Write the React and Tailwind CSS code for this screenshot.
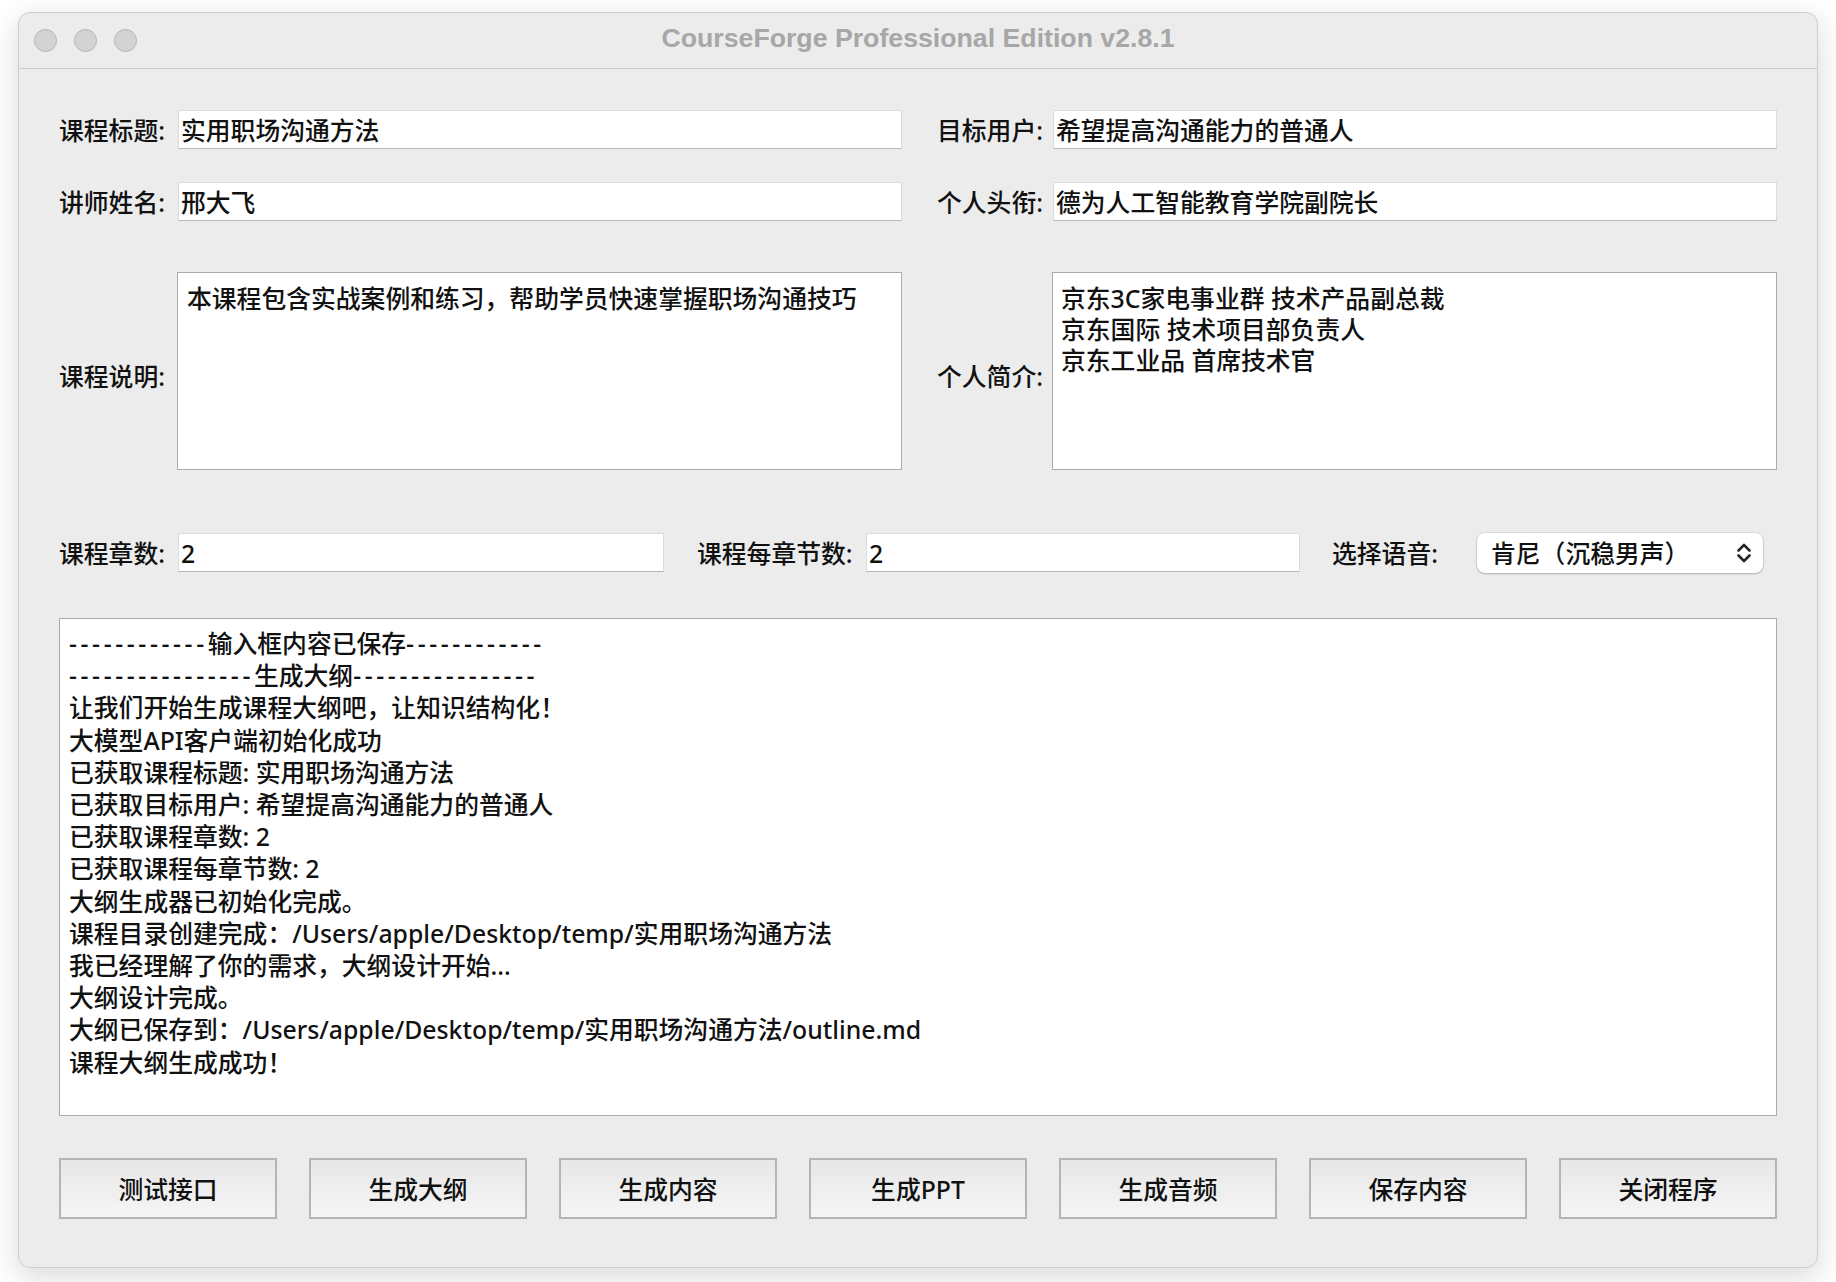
import React from "react";

const logLines = [
  <><span className="tracking-[3.6px]">------------</span>输入框内容已保存<span className="tracking-[3.6px]">------------</span></>,
  <><span className="tracking-[3.6px]">----------------</span>生成大纲<span className="tracking-[3.6px]">----------------</span></>,
  "让我们开始生成课程大纲吧，让知识结构化！",
  "大模型API客户端初始化成功",
  "已获取课程标题: 实用职场沟通方法",
  "已获取目标用户: 希望提高沟通能力的普通人",
  "已获取课程章数: 2",
  "已获取课程每章节数: 2",
  "大纲生成器已初始化完成。",
  "课程目录创建完成：/Users/apple/Desktop/temp/实用职场沟通方法",
  "我已经理解了你的需求，大纲设计开始...",
  "大纲设计完成。",
  "大纲已保存到：/Users/apple/Desktop/temp/实用职场沟通方法/outline.md",
  "课程大纲生成成功！",
];

const buttons = ["测试接口", "生成大纲", "生成内容", "生成PPT", "生成音频", "保存内容", "关闭程序"];

function Input({ value, className = "" }) {
  return (
    <div
      className={
        "h-[39px] bg-white border border-[#dcdcdc] border-b-[#b6b6b6] flex items-center pl-[2px] pt-[3px] whitespace-nowrap overflow-hidden " +
        className
      }
    >
      {value}
    </div>
  );
}

function Label({ text, className = "" }) {
  return <div className={"shrink-0 whitespace-nowrap pt-[2px] " + className}>{text}</div>;
}

export default function App() {
  return (
    <div className="w-[1836px] h-[1282px] bg-white pt-[12px] px-[18px] font-['Noto_Sans','Noto_Sans_CJK_SC',sans-serif] font-medium text-[24.8px] text-[#111]">
      <div className="w-[1800px] h-[1256px] rounded-[12px] bg-[#ececec] border border-[#cdcdcd] shadow-[0_8px_30px_rgba(0,0,0,0.16)] flex flex-col">
        {/* title bar */}
        <div className="h-[56px] border-b border-[#cbcbcb] grid grid-cols-[1fr_auto_1fr] items-center">
          <div className="flex items-center gap-[17px] pl-[15px]">
            <div className="w-[23px] h-[23px] rounded-full bg-[#d3d3d3] border border-[#b4b4b4]" />
            <div className="w-[23px] h-[23px] rounded-full bg-[#d3d3d3] border border-[#b4b4b4]" />
            <div className="w-[23px] h-[23px] rounded-full bg-[#d3d3d3] border border-[#b4b4b4]" />
          </div>
          <div className="font-['Liberation_Sans',sans-serif] font-bold text-[26.7px] text-[#a7a7a7] leading-none pb-[4px]">
            CourseForge Professional Edition v2.8.1
          </div>
          <div />
        </div>

        {/* content */}
        <div className="flex flex-col px-[40px] pt-[41px]">
          {/* row 1 */}
          <div className="flex h-[39px] gap-[35px] items-center">
            <div className="flex w-[843px] items-center">
              <Label text="课程标题:" className="w-[119px]" />
              <Input value="实用职场沟通方法" className="flex-1" />
            </div>
            <div className="flex flex-1 items-center">
              <Label text="目标用户:" className="w-[116px]" />
              <Input value="希望提高沟通能力的普通人" className="flex-1" />
            </div>
          </div>

          {/* row 2 */}
          <div className="flex h-[39px] gap-[35px] items-center mt-[33px]">
            <div className="flex w-[843px] items-center">
              <Label text="讲师姓名:" className="w-[119px]" />
              <Input value="邢大飞" className="flex-1" />
            </div>
            <div className="flex flex-1 items-center">
              <Label text="个人头衔:" className="w-[116px]" />
              <Input value="德为人工智能教育学院副院长" className="flex-1" />
            </div>
          </div>

          {/* textareas */}
          <div className="flex h-[198px] gap-[35px] mt-[51px]">
            <div className="flex w-[843px] items-center">
              <Label text="课程说明:" className="w-[118px] mt-[10px]" />
              <div className="flex-1 h-full bg-white border border-[#ababab] pl-[9px] pt-[10px] leading-[31px]">
                本课程包含实战案例和练习，帮助学员快速掌握职场沟通技巧
              </div>
            </div>
            <div className="flex flex-1 items-center">
              <Label text="个人简介:" className="w-[115px] mt-[10px]" />
              <div className="flex-1 h-full bg-white border border-[#ababab] pl-[8px] pt-[10px] leading-[31px]">
                <div>京东3C家电事业群 技术产品副总裁</div>
                <div>京东国际 技术项目部负责人</div>
                <div>京东工业品 首席技术官</div>
              </div>
            </div>
          </div>

          {/* row 3 */}
          <div className="flex h-[39px] items-center mt-[63px]">
            <Label text="课程章数:" className="w-[119px]" />
            <Input value="2" className="w-[486px]" />
            <Label text="课程每章节数:" className="w-[169px] ml-[33px]" />
            <Input value="2" className="w-[434px]" />
            <Label text="选择语音:" className="w-[145px] ml-[32px]" />
            <div className="w-[286px] h-[40px] bg-white rounded-[8px] shadow-[0_0_0_1px_rgba(0,0,0,0.07),0_1px_2px_rgba(0,0,0,0.22)] flex items-center justify-between pl-[14px] pr-[11px]">
              <span className="pt-[2px]">肯尼（沉稳男声）</span>
              <svg width="16" height="22" viewBox="0 0 16 22" fill="none" stroke="#262626" strokeWidth="2.6" strokeLinecap="round" strokeLinejoin="round">
                <path d="M2.5 8.5 L8 3 L13.5 8.5" />
                <path d="M2.5 13.5 L8 19 L13.5 13.5" />
              </svg>
            </div>
          </div>

          {/* log */}
          <div className="h-[498px] mt-[46px] bg-white border border-[#ababab] pl-[9px] pt-[8px] leading-[32.2px] whitespace-nowrap overflow-hidden">
            {logLines.map((l, i) => (
              <div key={i}>{l}</div>
            ))}
          </div>

          {/* buttons */}
          <div className="flex justify-between mt-[42px]">
            {buttons.map((b) => (
              <div
                key={b}
                className="w-[218px] h-[61px] border-2 border-[#b4b4b4] bg-gradient-to-b from-[#e7e7e7] to-[#f5f5f5] flex items-center justify-center pt-[2px]"
              >
                {b}
              </div>
            ))}
          </div>
        </div>
      </div>
    </div>
  );
}
